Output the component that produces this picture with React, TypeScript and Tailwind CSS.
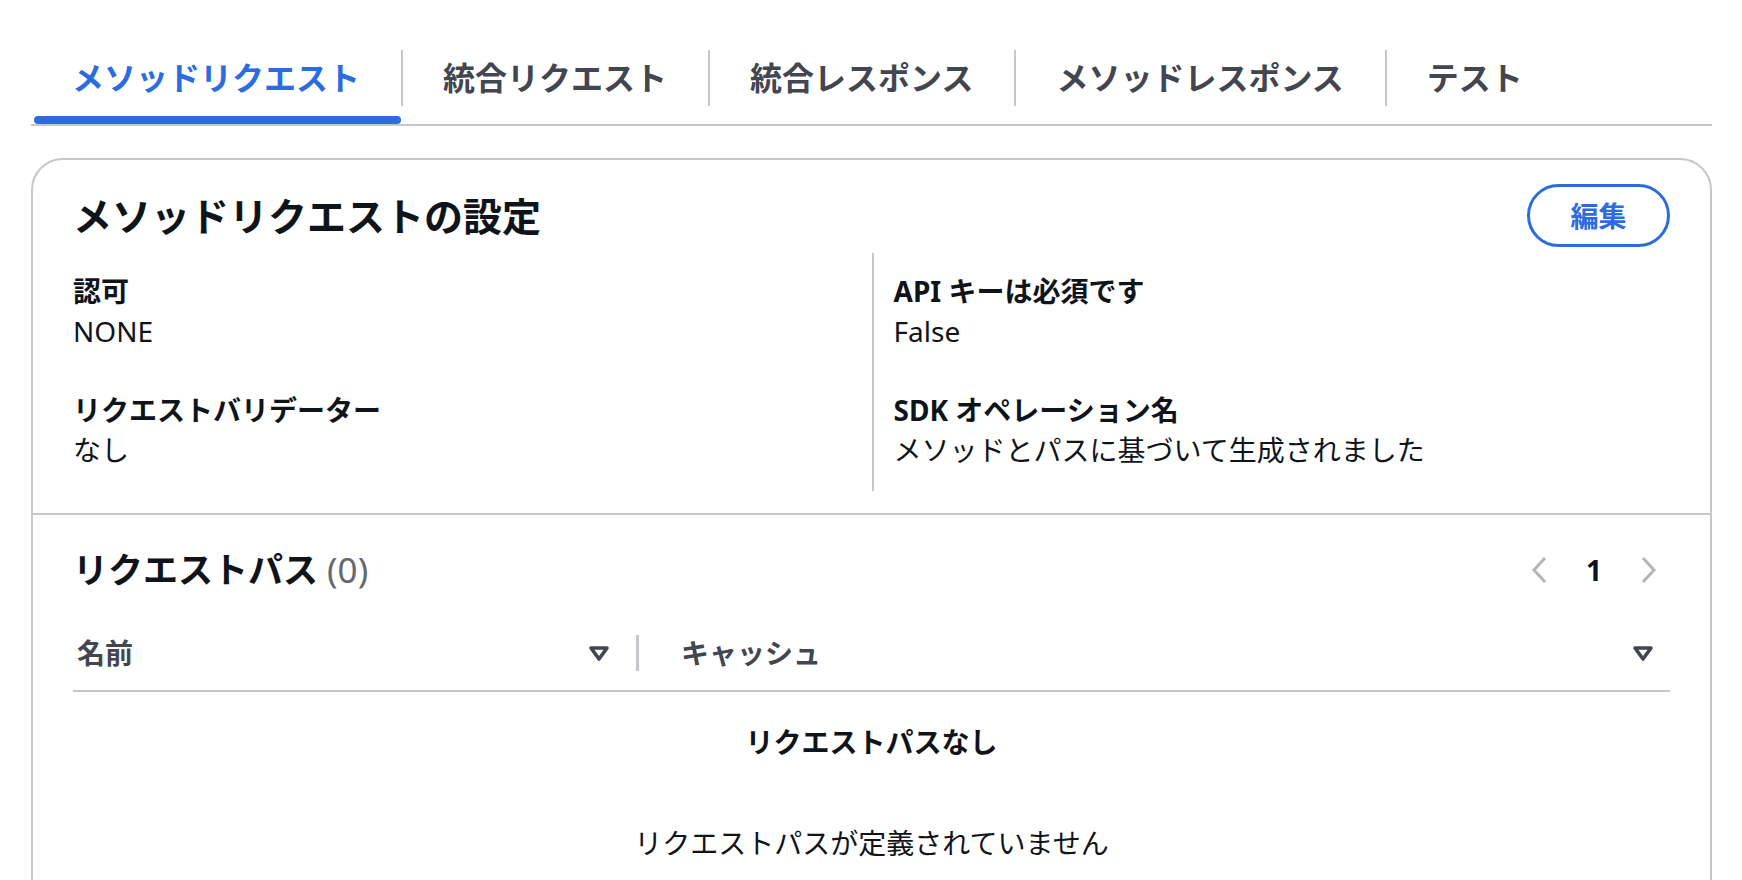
import React from "react";

const font = { fontFamily: '"Noto Sans", "Noto Sans CJK JP", sans-serif' };

function Divider() {
  return <div className="h-[56px] w-[2px] self-start mt-[50px] bg-[#c6c6cd]" />;
}

function Tab({ label, active, first }: { label: string; active?: boolean; first?: boolean }) {
  return (
    <div className="flex flex-col">
      <div
        className={
          "mt-[50px] h-[56px] flex items-center pr-[41px] text-[32px] font-bold leading-none " +
          (first ? "pl-[41px] " : "pl-[40px] ") +
          (active ? "text-[#2c6cde]" : "text-[#424650]")
        }
      >
        {label}
      </div>
      <div className="h-[10px]" />
      <div className={"h-[8px] ml-[3px] rounded-full " + (active ? "bg-[#2c6cde]" : "bg-transparent")} />
    </div>
  );
}

function SortIcon() {
  return (
    <svg width="22" height="17" viewBox="0 0 22 17" className="shrink-0">
      <path d="M3 3 H19 L11 14 Z" fill="none" stroke="#424650" strokeWidth="3.6" strokeLinejoin="round" />
    </svg>
  );
}

function KV({ label, value }: { label: string; value: string }) {
  return (
    <div>
      <div className="text-[28px] leading-[40px] font-bold text-[#0f141a]">{label}</div>
      <div className="text-[28px] leading-[40px] text-[#0f141a]">{value}</div>
    </div>
  );
}

export default function App() {
  return (
    <div className="w-[1742px] h-[880px] overflow-hidden bg-white" style={font}>
      <div className="ml-[31px] w-[1681px] flex border-b-2 border-[#c6c6cd]">
        <Tab label="メソッドリクエスト" active first />
        <Divider />
        <Tab label="統合リクエスト" />
        <Divider />
        <Tab label="統合レスポンス" />
        <Divider />
        <Tab label="メソッドレスポンス" />
        <Divider />
        <Tab label="テスト" />
      </div>

      <div className="ml-[31px] mt-[32px] w-[1681px] h-[900px] border-2 border-[#c6c6cd] rounded-[32px] bg-white">
        <div className="px-[40px] pt-[32px] pb-[22px]">
          <div className="flex items-start justify-between">
            <h2 className="text-[39px] leading-[48px] font-bold text-[#0f141a]">メソッドリクエストの設定</h2>
            <button className="mt-[-8px] w-[143px] h-[63px] rounded-full border-[3px] border-[#2c6cde] text-[#2c6cde] text-[28px] font-bold flex items-center justify-center">
              編集
            </button>
          </div>
          <div className="mt-[6px] grid grid-cols-2">
            <div className="flex flex-col gap-[39px] pt-[18px] pb-[21px]">
              <KV label="認可" value="NONE" />
              <KV label="リクエストバリデーター" value="なし" />
            </div>
            <div className="flex flex-col gap-[39px] pt-[18px] pb-[21px] border-l-2 border-[#c6c6cd] pl-[20px]">
              <KV label="API キーは必須です" value="False" />
              <KV label="SDK オペレーション名" value="メソッドとパスに基づいて生成されました" />
            </div>
          </div>
        </div>

        <div className="border-t-2 border-[#c6c6cd] px-[40px] pt-[33px]">
          <div className="flex items-center justify-between">
            <h2 className="text-[35px] leading-[44px] font-bold text-[#0f141a]">
              リクエストパス <span className="font-normal text-[#656871]">(0)</span>
            </h2>
            <div className="flex items-center mr-[12px]">
              <svg width="18" height="28" viewBox="0 0 18 28">
                <path d="M15 2 L4 14 L15 26" fill="none" stroke="#b4b4bb" strokeWidth="3" />
              </svg>
              <span className="mx-[38px] text-[28px] font-bold text-[#0f141a] leading-none">1</span>
              <svg width="18" height="28" viewBox="0 0 18 28">
                <path d="M3 2 L14 14 L3 26" fill="none" stroke="#b4b4bb" strokeWidth="3" />
              </svg>
            </div>
          </div>

          <div className="mt-[24px] flex border-b-2 border-[#c6c6cd] h-[76px] items-center">
            <div className="w-[563px] flex items-center justify-between pl-[4px] pr-[26px]">
              <span className="text-[28px] font-bold text-[#424650]">名前</span>
              <SortIcon />
            </div>
            <div className="w-[3px] h-[36px] bg-[#c6c6cd]" />
            <div className="flex-1 flex items-center justify-between pl-[42px] pr-[16px]">
              <span className="text-[28px] font-bold text-[#424650]">キャッシュ</span>
              <SortIcon />
            </div>
          </div>

          <div className="pt-[30px] flex flex-col items-center">
            <div className="text-[28px] leading-[40px] font-bold text-[#0f141a]">リクエストパスなし</div>
            <div className="mt-[61px] text-[28px] leading-[40px] text-[#0f141a]">リクエストパスが定義されていません</div>
          </div>
        </div>
      </div>
    </div>
  );
}
